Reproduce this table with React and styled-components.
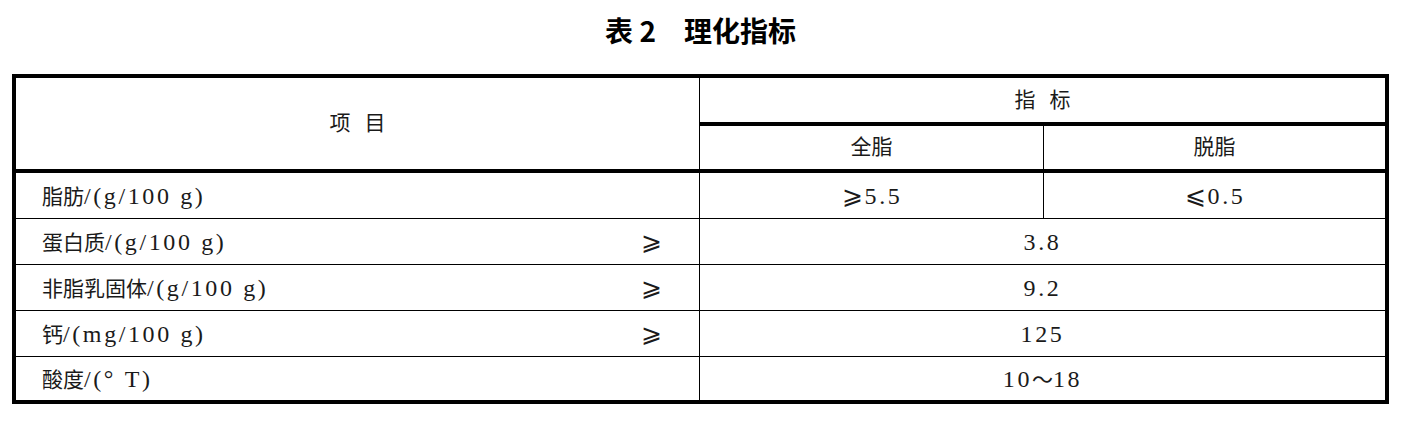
import React from "react";
import styled, { createGlobalStyle } from "styled-components";

const GlobalStyle = createGlobalStyle`
  html, body {
    margin: 0;
    padding: 0;
    background: #ffffff;
  }
  body {
    font-family: "Liberation Serif", "Noto Sans CJK SC", serif;
    color: #111;
  }
`;

const Page = styled.div`
  width: 1405px;
  padding: 10px 16px 18px 12px;
  box-sizing: border-box;
`;

const Title = styled.h2`
  margin: 0 0 24px;
  height: 40px;
  line-height: 40px;
  text-align: center;
  font-family: "Noto Sans CJK SC", "Liberation Sans", sans-serif;
  font-weight: 700;
  font-size: 28px;
  color: #000;
`;

const Grid = styled.div`
  display: grid;
  grid-template-columns: 684px 344px 1fr;
  grid-template-rows: 48px 47px repeat(4, 46px) 43px;
  border: 4px solid #000;
  width: 1377px;
  box-sizing: border-box;
`;

const Cell = styled.div`
  box-sizing: border-box;
  display: flex;
  align-items: center;
  justify-content: ${(p) => (p.$left ? "space-between" : "center")};
  padding: ${(p) => (p.$left ? "0 36px 0 26px" : "0")};
  border-right: ${(p) => (p.$last ? "none" : "1px solid #000")};
  border-bottom: ${(p) =>
    p.$heavy ? "4px solid #000" : p.$bottom ? "none" : "1px solid #000"};
  grid-column: ${(p) => p.$col || "auto"};
  grid-row: ${(p) => p.$row || "auto"};
  font-size: 21px;
  line-height: 1;
  white-space: nowrap;
  color: #1a1a1a;
`;

const Head = styled.span`
  word-spacing: 9px;
`;

const Lat = styled.span`
  letter-spacing: 2.6px;
  font-size: 24px;
`;

const Sym = styled.span`
  font-family: "DejaVu Sans", "Noto Sans CJK SC", sans-serif;
  font-size: 25px;
  font-weight: 300;
  display: inline-block;
  width: 24px;
  text-align: center;
`;

const rows = [
  { cn: "蛋白质", unit: "/(g/100 g)", sign: true, value: "3.8" },
  { cn: "非脂乳固体", unit: "/(g/100 g)", sign: true, value: "9.2" },
  { cn: "钙", unit: "/(mg/100 g)", sign: true, value: "125" },
  { cn: "酸度", unit: "/(° T)", sign: false, value: "10～18" },
];

function Value({ text }) {
  if (text.includes("～")) {
    const [a, b] = text.split("～");
    return (
      <span>
        <Lat>{a}</Lat>～<Lat>{b}</Lat>
      </span>
    );
  }
  return <Lat>{text}</Lat>;
}

export default function App() {
  return (
    <Page>
      <GlobalStyle />
      <Title>表 2　理化指标</Title>
      <Grid>
        <Cell $row="1 / span 2" $col="1" $heavy>
          <Head>项 目</Head>
        </Cell>
        <Cell $col="2 / span 2" $last $heavy>
          <Head>指 标</Head>
        </Cell>
        <Cell $heavy>全脂</Cell>
        <Cell $heavy $last>
          脱脂
        </Cell>

        <Cell $left>
          <span>
            脂肪<Lat>/(g/100 g)</Lat>
          </span>
        </Cell>
        <Cell>
          <span>
            <Sym>⩾</Sym>
            <Lat>5.5</Lat>
          </span>
        </Cell>
        <Cell $last>
          <span>
            <Sym>⩽</Sym>
            <Lat>0.5</Lat>
          </span>
        </Cell>

        {rows.map((r, i) => {
          const isLast = i === rows.length - 1;
          return (
            <React.Fragment key={r.cn}>
              <Cell $left $bottom={isLast}>
                <span>
                  {r.cn}
                  <Lat>{r.unit}</Lat>
                </span>
                {r.sign && <Sym>⩾</Sym>}
              </Cell>
              <Cell $col="2 / span 2" $last $bottom={isLast}>
                <Value text={r.value} />
              </Cell>
            </React.Fragment>
          );
        })}
      </Grid>
    </Page>
  );
}
